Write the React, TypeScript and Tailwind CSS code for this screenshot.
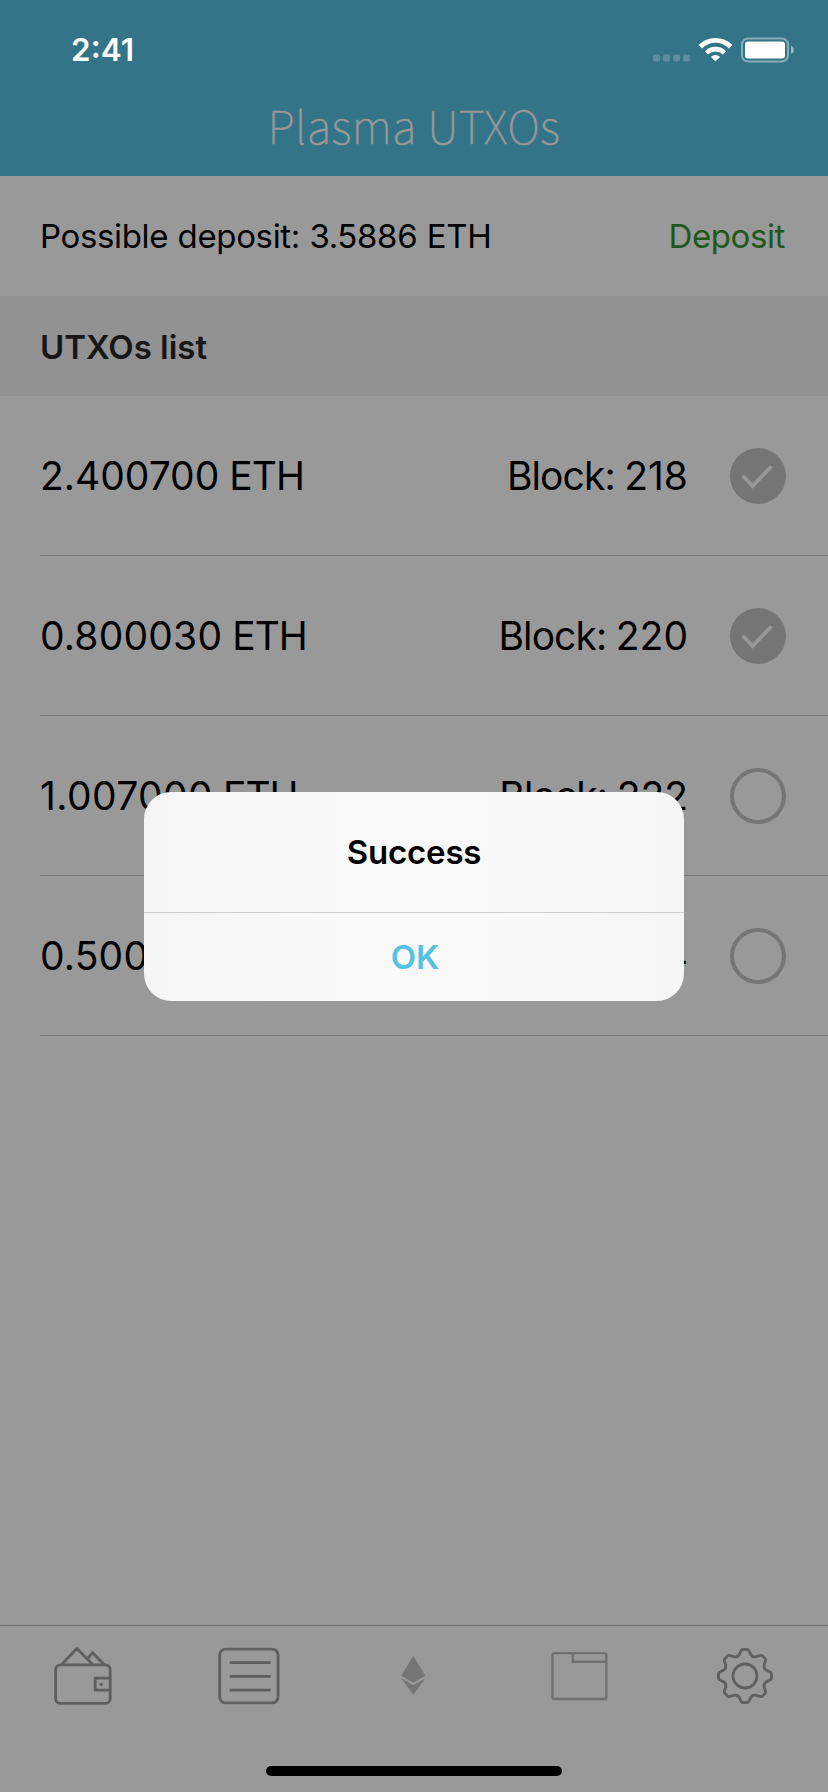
import React from "react";

type Utxo = { amount: string; block: string; selected: boolean; tracking: string };

const utxos: Utxo[] = [
  { amount: "2.400700", block: "218", selected: true, tracking: "tracking-[0px]" },
  { amount: "0.800030", block: "220", selected: true, tracking: "tracking-[0.2px]" },
  { amount: "1.007000", block: "222", selected: false, tracking: "tracking-[0.4px]" },
  { amount: "0.500000", block: "224", selected: false, tracking: "tracking-[0.2px]" },
];

function StatusIcons() {
  return (
    <svg width="142" height="26" viewBox="653 36.5 142 26" className="block">
      <g fill="#fff" fillOpacity="0.2">
        {[653, 663, 673, 683].map((x) => (
          <rect key={x} x={x} y="54" width="7" height="7" rx="2" />
        ))}
      </g>
      <g fill="none" stroke="#fff">
        <path d="M700.3 46.2A21.4 21.4 0 0 1 730.7 46.2" strokeWidth="4.8" />
        <path d="M706.5 52.3A12.7 12.7 0 0 1 724.5 52.3" strokeWidth="4.7" />
      </g>
      <path d="M715.5 61L710.9 56.4A6.5 6.5 0 0 1 720.1 56.4Z" fill="#fff" />
      <rect x="742" y="38" width="46" height="23" rx="6" fill="none" stroke="#fff" strokeOpacity="0.42" strokeWidth="2" />
      <rect x="745" y="41" width="40" height="17" rx="3" fill="#fff" />
      <path d="M791 45.2C794.8 46.4 794.8 52.6 791 53.2Z" fill="#fff" fillOpacity="0.5" />
    </svg>
  );
}

function SelectMark({ selected }: { selected: boolean }) {
  return selected ? (
    <svg width="56" height="56" viewBox="0 0 56 56">
      <circle cx="28" cy="28" r="28" fill="#757575" />
      <path d="M13.7 28.7L22.6 38L40.3 19.6" fill="none" stroke="#979797" strokeWidth="3.8" strokeLinecap="round" strokeLinejoin="miter" />
    </svg>
  ) : (
    <svg width="56" height="56" viewBox="0 0 56 56">
      <circle cx="28" cy="28" r="26" fill="none" stroke="#757575" strokeWidth="4" />
    </svg>
  );
}

function WalletIcon() {
  return (
    <svg width="60" height="60" viewBox="52.8 1646 60 60" fill="none" stroke="#5f5f5f" strokeWidth="2.8">
      <rect x="55.4" y="1664.8" width="54.6" height="38.6" rx="5" />
      <path d="M61.5 1664.5L76.7 1648.6L92.5 1664.5M87 1659L92.4 1652.8L104 1664.5" />
      <path d="M110 1678.2H95V1690.2H110" />
      <circle cx="101" cy="1684.2" r="1.7" fill="#5f5f5f" stroke="none" />
    </svg>
  );
}

function ListIcon() {
  return (
    <svg width="62" height="60" viewBox="217.4 1646 62 60" fill="none" stroke="#5f5f5f" strokeWidth="2.8" className="overflow-visible">
      <rect x="220.1" y="1649.1" width="58.4" height="53.8" rx="6" />
      <path d="M230 1662.7H271M230 1676.4H271M230 1690.1H271" />
    </svg>
  );
}

function EthIcon() {
  return (
    <svg width="24" height="60" viewBox="402 1646 24 60" fill="#757575" className="overflow-visible">
      <path d="M413.3 1655.7L425.3 1675.7L413.3 1682.7L401.3 1675.7Z" />
      <path d="M401.3 1678.2L413.3 1685.2L425.3 1678.2L413.3 1695Z" />
    </svg>
  );
}

function FolderIcon() {
  return (
    <svg width="56" height="60" viewBox="551.6 1646 56 60" fill="none" stroke="#707070" strokeWidth="2.4" className="overflow-visible">
      <rect x="552.1" y="1653.1" width="53.8" height="45.9" rx="2" />
      <path d="M572.4 1653V1661.8H606" />
    </svg>
  );
}

function GearIcon() {
  return (
    <svg width="60" height="60" viewBox="-30 -30 60 60" fill="none" stroke="#5f5f5f" strokeWidth="2.8">
      <circle r="12" />
      {[0, 45, 90, 135, 180, 225, 270, 315].map((a) => (
        <path
          key={a}
          transform={`rotate(${a})`}
          strokeLinecap="round"
          d="M-8 -19.4C-5.7 -20.4 -5.2 -22 -4.5 -23.9C-3.8 -25.8 -3.4 -26.5 -2 -26.5H2C3.4 -26.5 3.8 -25.8 4.5 -23.9C5.2 -22 5.7 -20.4 8 -19.4"
        />
      ))}
    </svg>
  );
}

export default function App() {
  return (
    <div className="relative flex h-[1792px] w-[828px] flex-col overflow-hidden bg-[#999999] font-['Inter','Liberation_Sans',sans-serif] text-black">
      <header className="flex h-[176px] flex-col bg-[#337488]">
        <div className="flex h-[99px] items-center justify-between pr-[33px] pl-[71px]">
          <span className="pt-px text-[31.5px] font-semibold text-white">2:41</span>
          <StatusIcons />
        </div>
        <h1 className="-mt-[3px] text-center font-['Noto_Sans_CJK_SC',sans-serif] text-[45px] leading-[58px] font-thin tracking-[0.45px] whitespace-nowrap text-[#9b9797] [-webkit-text-stroke:0.6px_#9b9797]">
          Plasma UTXOs
        </h1>
      </header>

      <section className="flex h-[120px] items-center justify-between pt-[2px] pr-[43px] pl-[40px] text-[33px] whitespace-nowrap">
        <span className="tracking-[-0.36px] [word-spacing:0.6px]">Possible deposit: 3.5886 ETH</span>
        <span className="tracking-[-0.4px] text-[#1f581c]">Deposit</span>
      </section>

      <div className="flex h-[100px] items-center bg-[#929292] pt-[3px] pl-[40px] text-[33px] font-semibold text-[#171717]">
        UTXOs list
      </div>

      <ul className="flex flex-1 flex-col">
        {utxos.map((u) => (
          <li
            key={u.block}
            className="ml-[40px] flex h-[160px] items-center border-b border-[#777777] pr-[42px] text-[39px] whitespace-nowrap"
          >
            <span className="flex-1 pt-[2px]">
              <span className={u.tracking}>{u.amount}</span> <span className="-ml-px tracking-[-1px]">ETH</span>
            </span>
            <span className="mr-[42px] pt-[2px]">
              <span className="-mr-[1.5px] tracking-[-0.9px]">Block:</span> {u.block}
            </span>
            <SelectMark selected={u.selected} />
          </li>
        ))}
      </ul>

      <nav className="flex h-[167px] flex-col items-center border-t border-[#6b6b6b]">
        <div className="grid h-[100px] w-full grid-cols-5 justify-items-center pt-[20px]">
          <WalletIcon />
          <ListIcon />
          <EthIcon />
          <FolderIcon />
          <GearIcon />
        </div>
        <div className="mt-[40px] h-[10px] w-[296px] rounded-full bg-black" />
      </nav>

      <div
        role="alertdialog"
        className="absolute top-[792px] left-[144px] flex h-[209px] w-[540px] flex-col overflow-hidden rounded-[27px] bg-[linear-gradient(90deg,#f5f5f5_0%,#f9f9f9_40%,#f9f9f9_58%,#f5f5f5_100%)]"
      >
        <div className="flex h-[120px] items-center justify-center pt-[2px] text-[33px] font-semibold tracking-[-0.2px]">Success</div>
        <button className="flex h-[89px] items-center justify-center border-t border-[#d0d0d0] pt-[1px] pl-[2px] text-[33px] font-semibold text-[#55c1e3]">
          OK
        </button>
      </div>
    </div>
  );
}
